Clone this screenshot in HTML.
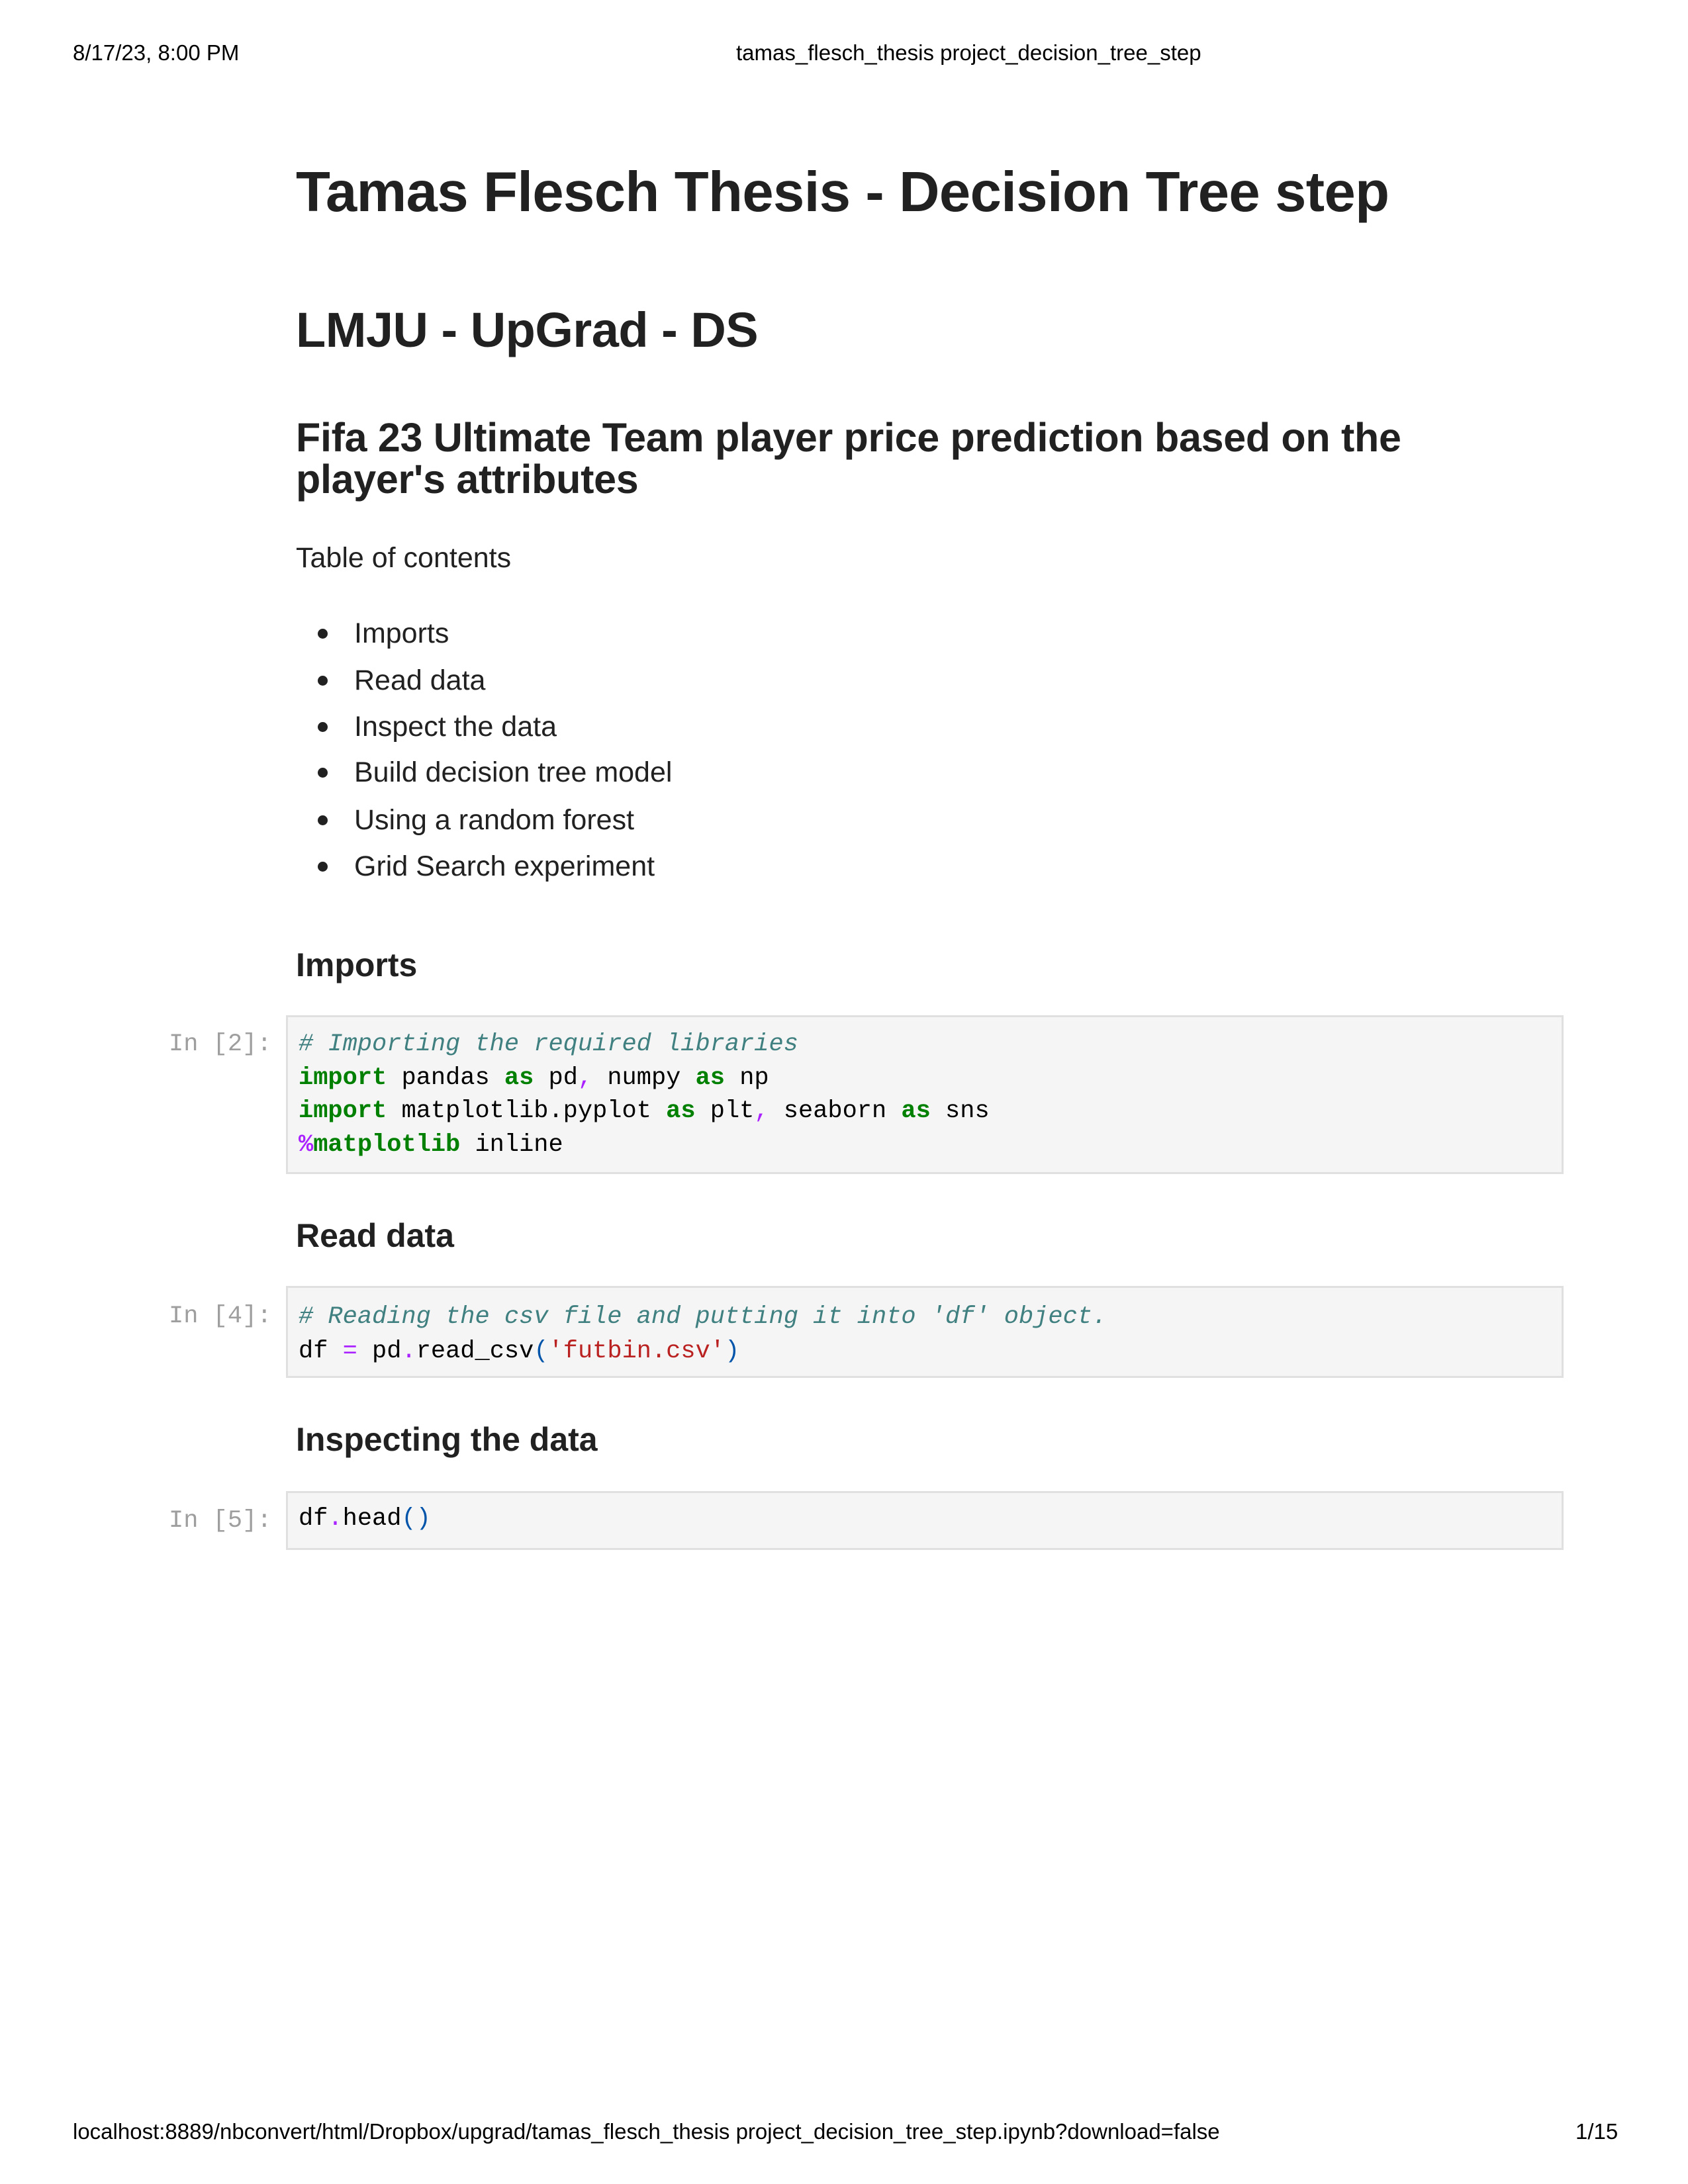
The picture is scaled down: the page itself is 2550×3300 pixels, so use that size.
<!DOCTYPE html>
<html><head><meta charset="utf-8"><style>
html,body{margin:0;padding:0;background:#fff}
body{width:2550px;height:3300px;position:relative;overflow:hidden;font-family:"Liberation Sans",sans-serif;color:#212121}
.a{position:absolute;white-space:pre;line-height:1}
.hd{font-size:33px;color:#000}
.h{font-weight:bold}
.box{position:absolute;left:432px;width:1930px;background:#f5f5f5;border:3px solid #e0e0e0;box-sizing:border-box}
.code{font-family:"Liberation Mono",monospace;font-size:37px;color:#000}
.pr{font-family:"Liberation Mono",monospace;font-size:37px;color:#9e9e9e}
.c{color:#408080;font-style:italic}
.k{color:#008000;font-weight:bold}
.o{color:#AA22FF}
.m{color:#AA22FF;font-weight:bold}
.p{color:#0055AA}
.s{color:#BA2121}
.b{position:absolute;width:15px;height:15px;border-radius:50%;background:#212121;left:480px}
.t{font-size:43px}
</style></head><body>
<div class="a hd" style="left:110px;top:63px">8/17/23, 8:00 PM</div>
<div class="a hd" style="left:1112px;top:63px">tamas_flesch_thesis project_decision_tree_step</div>

<div class="a h" style="left:447px;top:248px;font-size:85px;letter-spacing:-0.6px">Tamas Flesch Thesis - Decision Tree step</div>
<div class="a h" style="left:447px;top:462px;font-size:74px;letter-spacing:-0.5px">LMJU - UpGrad - DS</div>
<div class="a h" style="left:447px;top:630px;font-size:61px;line-height:63px;white-space:normal;width:1740px;letter-spacing:-0.3px">Fifa 23 Ultimate Team player price prediction based on the player's attributes</div>

<div class="a t" style="left:447px;top:822px">Table of contents</div>
<div class="b" style="top:950px"></div><div class="a t" style="left:535px;top:936px">Imports</div>
<div class="b" style="top:1021px"></div><div class="a t" style="left:535px;top:1007px">Read data</div>
<div class="b" style="top:1091px"></div><div class="a t" style="left:535px;top:1077px">Inspect the data</div>
<div class="b" style="top:1160px"></div><div class="a t" style="left:535px;top:1146px">Build decision tree model</div>
<div class="b" style="top:1232px"></div><div class="a t" style="left:535px;top:1218px">Using a random forest</div>
<div class="b" style="top:1302px"></div><div class="a t" style="left:535px;top:1288px">Grid Search experiment</div>

<div class="a h" style="left:447px;top:1433px;font-size:50px">Imports</div>
<div class="box" style="top:1534px;height:240px"></div>
<div class="a pr" style="left:255px;top:1560px">In [2]:</div>
<div class="a code" style="left:451px;top:1553px;line-height:50.5px"><span class="c"># Importing the required libraries</span>
<span class="k">import</span> pandas <span class="k">as</span> pd<span class="o">,</span> numpy <span class="k">as</span> np
<span class="k">import</span> matplotlib.pyplot <span class="k">as</span> plt<span class="o">,</span> seaborn <span class="k">as</span> sns
<span class="m">%</span><span class="k">matplotlib</span> inline</div>

<div class="a h" style="left:447px;top:1842px;font-size:50px">Read data</div>
<div class="box" style="top:1943px;height:139px"></div>
<div class="a pr" style="left:255px;top:1971px">In [4]:</div>
<div class="a code" style="left:451px;top:1964px;line-height:52px"><span class="c"># Reading the csv file and putting it into 'df' object.</span>
df <span class="o">=</span> pd<span class="o">.</span>read_csv<span class="p">(</span><span class="s">'futbin.csv'</span><span class="p">)</span></div>

<div class="a h" style="left:447px;top:2150px;font-size:50px">Inspecting the data</div>
<div class="box" style="top:2253px;height:89px"></div>
<div class="a pr" style="left:255px;top:2280px">In [5]:</div>
<div class="a code" style="left:451px;top:2277px">df<span class="o">.</span>head<span class="p">()</span></div>

<div class="a hd" style="left:110px;top:3204px">localhost:8889/nbconvert/html/Dropbox/upgrad/tamas_flesch_thesis project_decision_tree_step.ipynb?download=false</div>
<div class="a hd" style="left:2380px;top:3204px">1/15</div>
</body></html>
